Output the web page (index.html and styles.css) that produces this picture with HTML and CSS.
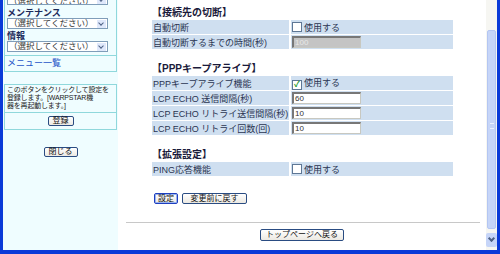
FILE: index.html
```html
<!doctype html>
<html lang="ja">
  <head>
    <meta charset="UTF-8">
    <title>PPPキープアライブ設定</title>
    <link rel="stylesheet" href="styles.css">
  </head>
  <body>
    <div class="window">
      <!-- left menu -->
      <div class="side">
        <div class="menu-box">
          <div class="sel sel-cut"><span>（選択してください）</span><i class="drop"></i></div>
          <div class="menu-label">メンテナンス</div>
          <div class="sel"><span>（選択してください）</span><i class="drop"></i></div>
          <div class="menu-label">情報</div>
          <div class="sel"><span>（選択してください）</span><i class="drop"></i></div>
          <div class="menu-link"><a href="#">メニュー一覧</a></div>
        </div>

        <div class="save-box">
          <p>このボタンをクリックして設定を<br>登録します。[WARPSTAR機<br>器を再起動します。]</p>
          <div class="save-row"><button class="btn">登録</button></div>
        </div>

        <div class="close-row"><button class="btn">閉じる</button></div>
      </div>

      <!-- main settings -->
      <div class="main">
        <div class="content">
          <h3>【接続先の切断】</h3>
          <table class="set">
            <tr><td class="lbl">自動切断</td><td><span class="chk"></span>使用する</td></tr>
            <tr><td class="lbl">自動切断するまでの時間(秒)</td><td><span class="txt off">100</span></td></tr>
          </table>

          <h3 class="sec">【PPPキープアライブ】</h3>
          <table class="set">
            <tr><td class="lbl">PPPキープアライブ機能</td><td><span class="chk on">✓</span>使用する</td></tr>
            <tr><td class="lbl">LCP ECHO 送信間隔(秒)</td><td><span class="txt">60</span></td></tr>
            <tr><td class="lbl">LCP ECHO リトライ送信間隔(秒)</td><td><span class="txt">10</span></td></tr>
            <tr><td class="lbl">LCP ECHO リトライ回数(回)</td><td><span class="txt">10</span></td></tr>
          </table>

          <h3 class="sec">【拡張設定】</h3>
          <table class="set">
            <tr><td class="lbl">PING応答機能</td><td><span class="chk"></span>使用する</td></tr>
          </table>

          <div class="actions">
            <button class="btn btn-act btn-blue">設定</button>
            <button class="btn btn-act btn-wide">変更前に戻す</button>
          </div>
        </div>

        <hr class="rule">
        <div class="back-row"><button class="btn btn-back">トップページへ戻る</button></div>
      </div>

      <!-- scrollbar -->
      <div class="scroll">
        <div class="track"></div>
        <div class="thumb"><i></i></div>
        <div class="arrow"><i></i></div>
      </div>
    </div>
  </body>
</html>
```

FILE: styles.css
```css
body {
  margin: 0;
  font-family: "Liberation Sans", "Noto Sans CJK JP", sans-serif;
  font-size: 10px;
  color: #222;
}
.window {
  display: flex;
  width: 494px;
  height: 250px;
  border-left: 3px solid #0a3ad8;
  border-right: 3px solid #0a3ad8;
  border-bottom: 4px solid #0a3ad8;
  overflow: hidden;
}

/* left menu */
.side {
  width: 115px;
  background: #effdff;
  flex-shrink: 0;
}
.menu-box {
  margin-left: 1px;
  width: 109px;
  border: 1px solid #8fd8dc;
  border-top: none;
  padding: 0 0 3px 2px;
}
.sel {
  display: flex;
  align-items: center;
  justify-content: space-between;
  width: 98px;
  height: 9px;
  border: 1px solid #7f9db9;
  background: #fff;
  padding-left: 1px;
  font-size: 8.5px;
  line-height: 9px;
  color: #333;
}
.sel-cut {
  height: 4px;
  overflow: hidden;
  border-top: none;
  align-items: flex-end;
}
.sel-cut span {
  line-height: 5px;
}
.drop {
  width: 9px;
  height: 8px;
  margin-right: 1px;
  background: #dfe8fb;
  position: relative;
}
.drop::after {
  content: "";
  position: absolute;
  left: 2px;
  top: 1px;
  width: 3px;
  height: 3px;
  border-right: 1px solid #4d6185;
  border-bottom: 1px solid #4d6185;
  transform: rotate(45deg);
}
.menu-label {
  margin-top: 4px;
  height: 9px;
  line-height: 9px;
  font-size: 9px;
  font-weight: bold;
  color: #1c2a5a;
}
.menu-label + .sel + .menu-label {
  margin-top: 3px;
}
.menu-link {
  margin: 3px 0 0 -2px;
  padding: 3px 0 0 2px;
  border-top: 1px solid #8fd8dc;
  font-size: 9px;
  line-height: 9px;
}
.menu-link a {
  color: #1f55c8;
  text-decoration: none;
}
.save-box {
  margin: 12px 0 0 1px;
  width: 111px;
  border: 1px solid #8fd8dc;
}
.save-box p {
  margin: 0;
  padding: 1px 0 2px 2px;
  font-size: 7px;
  line-height: 8px;
  letter-spacing: -0.2px;
  white-space: nowrap;
  border-bottom: 1px solid #8fd8dc;
}
.save-row {
  text-align: center;
  padding: 3px 0 2px;
}
.save-row .btn {
  vertical-align: top;
}
.close-row {
  text-align: center;
  padding-top: 15px;
}
.btn {
  font-family: "Liberation Sans", "Noto Sans CJK JP", sans-serif;
  font-size: 8px;
  line-height: 8px;
  height: 10px;
  padding: 0 4px;
  border: 1px solid #2a4c82;
  border-radius: 2px;
  background: linear-gradient(#ffffff, #ece9e2);
  color: #111;
}

/* main settings */
.main {
  flex: 1;
  background: #fff;
  padding-top: 7px;
}
.content {
  margin-left: 34px;
  width: 301px;
}
h3 {
  margin: 0;
  height: 12px;
  line-height: 12px;
  font-size: 10px;
  font-weight: bold;
  color: #1a1a3a;
}
h3.sec {
  margin-top: 13px;
}
.set {
  width: 301px;
  table-layout: fixed;
  border-spacing: 0 1px;
  margin-top: 0;
}
.set td {
  height: 14px;
  padding: 0 0 0 1px;
  background: #cfdff0;
  font-size: 9px;
  color: #2a3450;
  white-space: nowrap;
  overflow: hidden;
}
.set td.lbl {
  width: 136px;
  border-right: 2px solid #fff;
}
.chk {
  display: inline-block;
  width: 8px;
  height: 8px;
  margin-right: 2px;
  border: 1px solid #5e7795;
  background: #fff;
  vertical-align: -1px;
  font-size: 8px;
  line-height: 8px;
  text-align: center;
  color: #1d9a2c;
  font-weight: bold;
}
.txt {
  display: inline-block;
  box-sizing: border-box;
  width: 69px;
  height: 12px;
  border: 1px solid #c8c8c0;
  border-top: 2px solid #777;
  border-left: 2px solid #777;
  background: #fff;
  font-size: 8px;
  line-height: 9px;
  padding-left: 1px;
  vertical-align: middle;
  color: #333;
}
.txt.off {
  background: #c4c4c4;
  color: #e8e8e8;
}
.actions {
  margin-top: 16px;
  display: flex;
  gap: 4px;
  margin-left: 2px;
}
.btn-act {
  height: 11px;
  padding: 0 3px;
}
.btn-blue {
  border-color: #1d3ec0;
  box-shadow: inset 0 0 0 1px #9bb4ee;
}
.btn-wide {
  width: 65px;
}
.rule {
  margin: 18px 6px 0 8px;
  border: none;
  border-top: 1px solid #c8c8c8;
}
.back-row {
  text-align: center;
  padding-top: 5px;
}
.btn-back {
  width: 84px;
  height: 12px;
}

/* scrollbar */
.scroll {
  width: 11px;
  flex-shrink: 0;
  display: flex;
  flex-direction: column;
  background: #f6f6f2;
}
.track {
  height: 30px;
}
.thumb {
  flex: 1;
  background: #c6d5f8;
  border: 1px solid #b4c6f2;
  border-radius: 2px;
  margin: 0 1px 4px;
  position: relative;
}
.thumb i {
  position: absolute;
  left: 2px;
  top: 92px;
  width: 4px;
  height: 4px;
  border-top: 1px solid #eef3ff;
  border-bottom: 1px solid #eef3ff;
}
.arrow {
  height: 14px;
  margin: 0 0 3px;
  background: #c6d5f8;
  border-radius: 2px;
  position: relative;
}
.arrow i {
  position: absolute;
  left: 3px;
  top: 3px;
  width: 3px;
  height: 3px;
  border-right: 2px solid #4d6185;
  border-bottom: 2px solid #4d6185;
  transform: rotate(45deg);
}
```
